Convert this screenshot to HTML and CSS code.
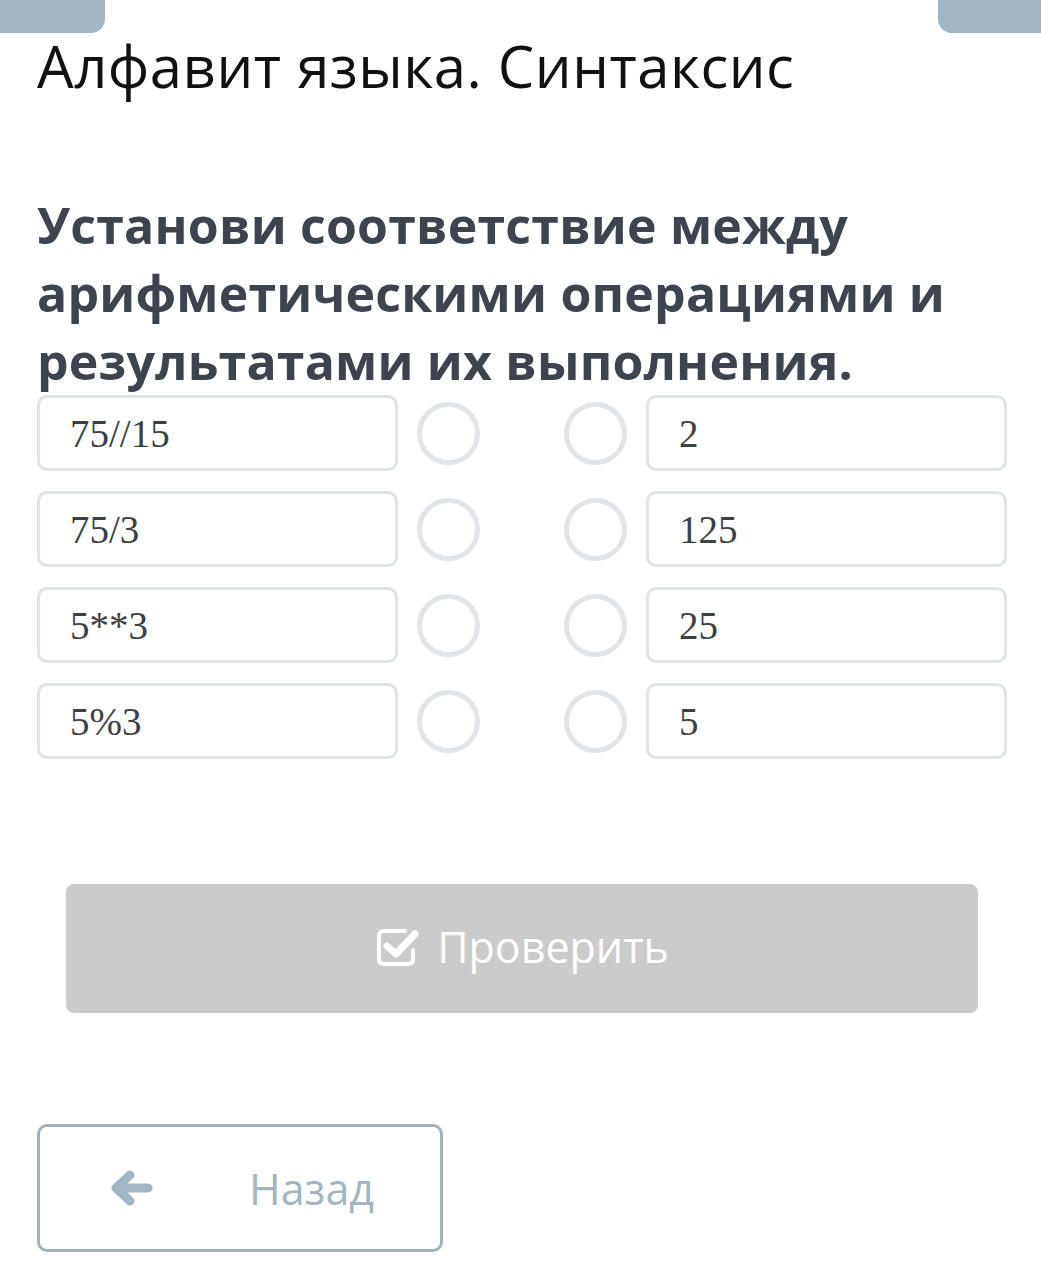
FILE: index.html
```html
<!DOCTYPE html>
<html lang="ru">

<head>
    <meta charset="UTF-8">
    <meta name="viewport" content="width=device-width, initial-scale=1.0">
    <title>Алфавит языка. Синтаксис</title>
    <link rel="stylesheet" href="styles.css">
</head>

<body>

    <div class="top-tabs">
        <div class="tab tab-left"></div>
        <div class="tab tab-right"></div>
    </div>

    <div class="page">
        <h1 class="title">Алфавит языка. Синтаксис</h1>

        <h2 class="question">Установи соответствие между арифметическими операциями и результатами их выполнения.</h2>

        <div class="match">
            <div class="match-row">
                <div class="item">75//15</div>
                <div class="dots"><span class="dot"></span><span class="dot"></span></div>
                <div class="item">2</div>
            </div>
            <div class="match-row">
                <div class="item">75/3</div>
                <div class="dots"><span class="dot"></span><span class="dot"></span></div>
                <div class="item">125</div>
            </div>
            <div class="match-row">
                <div class="item">5**3</div>
                <div class="dots"><span class="dot"></span><span class="dot"></span></div>
                <div class="item">25</div>
            </div>
            <div class="match-row">
                <div class="item">5%3</div>
                <div class="dots"><span class="dot"></span><span class="dot"></span></div>
                <div class="item">5</div>
            </div>
        </div>

        <button class="check-btn" disabled>
            <svg class="check-icon" viewBox="0 0 46 42" width="46" height="42">
                <path d="M30 5 H9 Q4 5 4 10 V33 Q4 38 9 38 H33 Q38 38 38 33 V24" fill="none" stroke="#fff" stroke-width="4" stroke-linecap="round" />
                <path d="M12 20 L21 28 L40 8" fill="none" stroke="#fff" stroke-width="7" stroke-linecap="round" stroke-linejoin="round" />
            </svg>
            Проверить
        </button>

        <button class="back-btn">
            <svg class="back-icon" viewBox="0 0 44 36" width="44" height="36">
                <path d="M38 18 H8 M20 5 L6 18 L20 31" fill="none" stroke="#a3b6c4" stroke-width="9" stroke-linecap="round" stroke-linejoin="round" />
            </svg>
            <span>Назад</span>
        </button>
    </div>

</body>

</html>
```

FILE: styles.css
```css
body {
    margin: 0;
    padding: 0;
    background: #fff;
    font-family: "Open Sans", "Liberation Sans", sans-serif;
}

.top-tabs {
    display: flex;
    justify-content: space-between;
    height: 33px;
}

.tab {
    width: 105px;
    height: 33px;
    background-color: #a1b5c3;
}

.tab-left {
    border-bottom-right-radius: 14px;
}

.tab-right {
    width: 103px;
    border-bottom-left-radius: 14px;
}

.page {
    padding: 0 34px 0 37px;
}

.title {
    margin: 0;
    font-size: 58px;
    font-weight: 400;
    line-height: 66px;
    letter-spacing: 0.5px;
    color: #111;
}

.question {
    margin: 92px 0 0;
    font-size: 50px;
    font-weight: 700;
    line-height: 68px;
    letter-spacing: 0.2px;
    color: #3d444e;
}

.match {
    display: flex;
    flex-direction: column;
    gap: 20px;
    margin-top: 0;
}

.match-row {
    display: grid;
    grid-template-columns: 361px 1fr 361px;
}

.item {
    height: 76px;
    box-sizing: border-box;
    border: 3px solid #e0e4e6;
    border-radius: 10px;
    padding: 0 30px;
    display: flex;
    align-items: center;
    font-family: "Liberation Serif", "DejaVu Serif", serif;
    font-size: 39px;
    color: #3c4045;
}

.dots {
    display: flex;
    justify-content: space-between;
    align-items: center;
    padding: 0 19px;
}

.dot {
    width: 63px;
    height: 63px;
    box-sizing: border-box;
    border: 5px solid #e1e4e8;
    border-radius: 50%;
}

.check-btn {
    display: flex;
    align-items: center;
    justify-content: center;
    gap: 16px;
    width: 912px;
    height: 129px;
    margin: 125px 0 0 29px;
    border: none;
    border-radius: 8px;
    background-color: #cbcbcb;
    color: #fff;
    font-family: "Open Sans", "Liberation Sans", sans-serif;
    font-size: 43px;
    padding: 0 0 4px 0;
}

.back-btn {
    display: flex;
    align-items: center;
    width: 406px;
    height: 128px;
    margin-top: 111px;
    box-sizing: border-box;
    border: 3px solid #a4b3b9;
    border-radius: 10px;
    background: #fff;
    padding: 0 0 0 70px;
    color: #a4b5bf;
    font-family: "Open Sans", "Liberation Sans", sans-serif;
    font-size: 43px;
}

.back-icon {
    margin-right: 95px;
}
```
